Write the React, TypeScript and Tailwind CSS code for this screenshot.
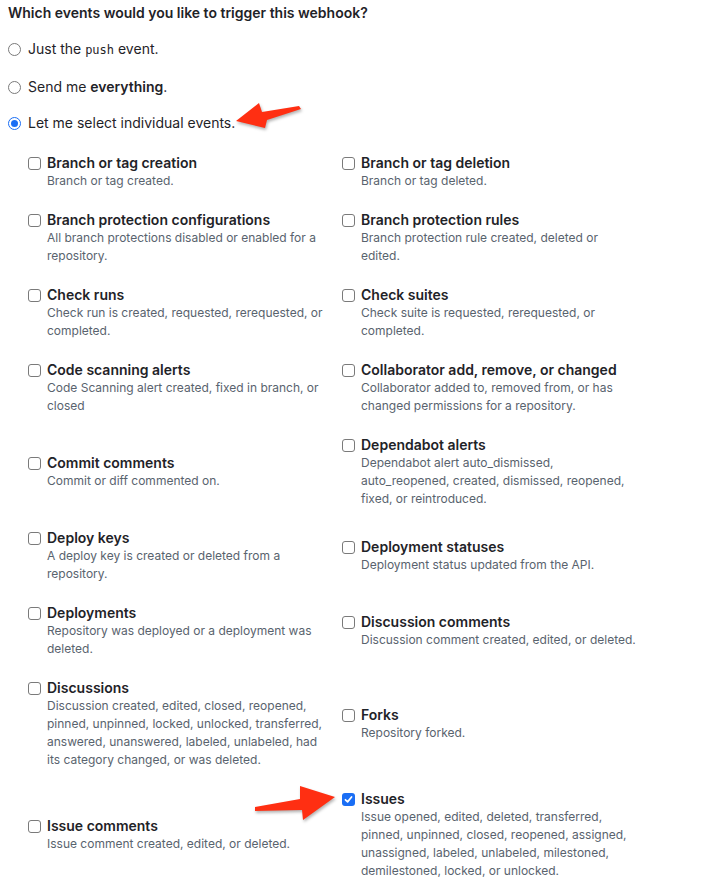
import React from "react";

type EventItem = {
  title: string;
  desc: string;
  checked?: boolean;
};

const rows: [EventItem, EventItem][] = [
  [
    { title: "Branch or tag creation", desc: "Branch or tag created." },
    { title: "Branch or tag deletion", desc: "Branch or tag deleted." },
  ],
  [
    { title: "Branch protection configurations", desc: "All branch protections disabled or enabled for a repository." },
    { title: "Branch protection rules", desc: "Branch protection rule created, deleted or edited." },
  ],
  [
    { title: "Check runs", desc: "Check run is created, requested, rerequested, or completed." },
    { title: "Check suites", desc: "Check suite is requested, rerequested, or completed." },
  ],
  [
    { title: "Code scanning alerts", desc: "Code Scanning alert created, fixed in branch, or closed" },
    { title: "Collaborator add, remove, or changed", desc: "Collaborator added to, removed from, or has changed permissions for a repository." },
  ],
  [
    { title: "Commit comments", desc: "Commit or diff commented on." },
    {
      title: "Dependabot alerts",
      desc: "Dependabot alert auto_dismissed, auto_reopened, created, dismissed, reopened, fixed, or reintroduced.",
    },
  ],
  [
    { title: "Deploy keys", desc: "A deploy key is created or deleted from a repository." },
    { title: "Deployment statuses", desc: "Deployment status updated from the API." },
  ],
  [
    { title: "Deployments", desc: "Repository was deployed or a deployment was deleted." },
    { title: "Discussion comments", desc: "Discussion comment created, edited, or deleted." },
  ],
  [
    {
      title: "Discussions",
      desc: "Discussion created, edited, closed, reopened, pinned, unpinned, locked, unlocked, transferred, answered, unanswered, labeled, unlabeled, had its category changed, or was deleted.",
    },
    { title: "Forks", desc: "Repository forked." },
  ],
  [
    { title: "Issue comments", desc: "Issue comment created, edited, or deleted." },
    {
      title: "Issues",
      desc: "Issue opened, edited, deleted, transferred, pinned, unpinned, closed, reopened, assigned, unassigned, labeled, unlabeled, milestoned, demilestoned, locked, or unlocked.",
      checked: true,
    },
  ],
];

const Radio = ({ selected }: { selected?: boolean }) =>
  selected ? (
    <span className="flex h-[13px] w-[13px] shrink-0 items-center justify-center rounded-full border-[1.5px] border-[#1a6ef5] bg-white">
      <span className="h-[7px] w-[7px] rounded-full bg-[#1a6ef5]" />
    </span>
  ) : (
    <span className="h-[13px] w-[13px] shrink-0 rounded-full border border-[#7a7a7a] bg-white" />
  );

const Checkbox = ({ checked }: { checked?: boolean }) =>
  checked ? (
    <span className="mt-[2.5px] flex h-[13px] w-[13px] shrink-0 items-center justify-center rounded-[3px] bg-[#1a6ef5]">
      <svg width="9" height="9" viewBox="0 0 10 10" fill="none">
        <path d="M1.6 5.3 L4 7.6 L8.4 2.2" stroke="white" strokeWidth="1.9" strokeLinecap="round" strokeLinejoin="round" />
      </svg>
    </span>
  ) : (
    <span className="mt-[2.5px] h-[13px] w-[13px] shrink-0 rounded-[3px] border border-[#7a7a7a] bg-white" />
  );

const EventOption = ({ item }: { item: EventItem }) => (
  <div className="flex gap-[6px]">
    <Checkbox checked={item.checked} />
    <div className="max-w-[277px]">
      <div className="text-[14px] font-semibold leading-[18px] text-[#1f2328]">{item.title}</div>
      <div className="text-[12px] leading-[18px] text-[#59636e]">{item.desc}</div>
    </div>
  </div>
);

export default function App() {
  return (
    <div className="relative h-[895px] w-[708px] overflow-hidden bg-white font-['Inter','Liberation_Sans',sans-serif] text-[#1f2328]">
      <div className="pl-[8px] pt-[3px]">
        <h3 className="text-[14px] font-semibold leading-5">Which events would you like to trigger this webhook?</h3>

        <div className="mt-[16px] flex flex-col text-[14px] leading-5">
          <label className="flex items-center gap-[7px]">
            <Radio />
            <span>
              Just the <code className="font-['DejaVu_Sans_Mono','Liberation_Mono',monospace] text-[12px]">push</code> event.
            </span>
          </label>
          <label className="mt-[17px] flex items-center gap-[7px]">
            <Radio />
            <span>
              Send me <strong className="font-semibold">everything</strong>.
            </span>
          </label>
          <label className="mt-[16px] flex items-center gap-[7px]">
            <Radio selected />
            <span>Let me select individual events.</span>
          </label>
        </div>
      </div>

      <div className="mt-[21px] grid grid-cols-[314px_1fr] items-center gap-y-[21px] pl-[28px]">
        {rows.map(([left, right]) => (
          <React.Fragment key={left.title}>
            <EventOption item={left} />
            <EventOption item={right} />
          </React.Fragment>
        ))}
      </div>

      {/* annotation arrows */}
      <svg
        className="pointer-events-none absolute inset-0"
        width="708"
        height="895"
        viewBox="0 0 708 895"
        style={{ filter: "drop-shadow(1px 2px 1.5px rgba(0,0,0,0.3))" }}
      >
        <polygon points="236,121 259,103 262,112 299,106 301,109 267,120 265,128" fill="#ff2f12" />
        <polygon points="335,797 300,786 300,799 255,807 255,811 302,810 303,820" fill="#ff2f12" />
      </svg>
    </div>
  );
}
